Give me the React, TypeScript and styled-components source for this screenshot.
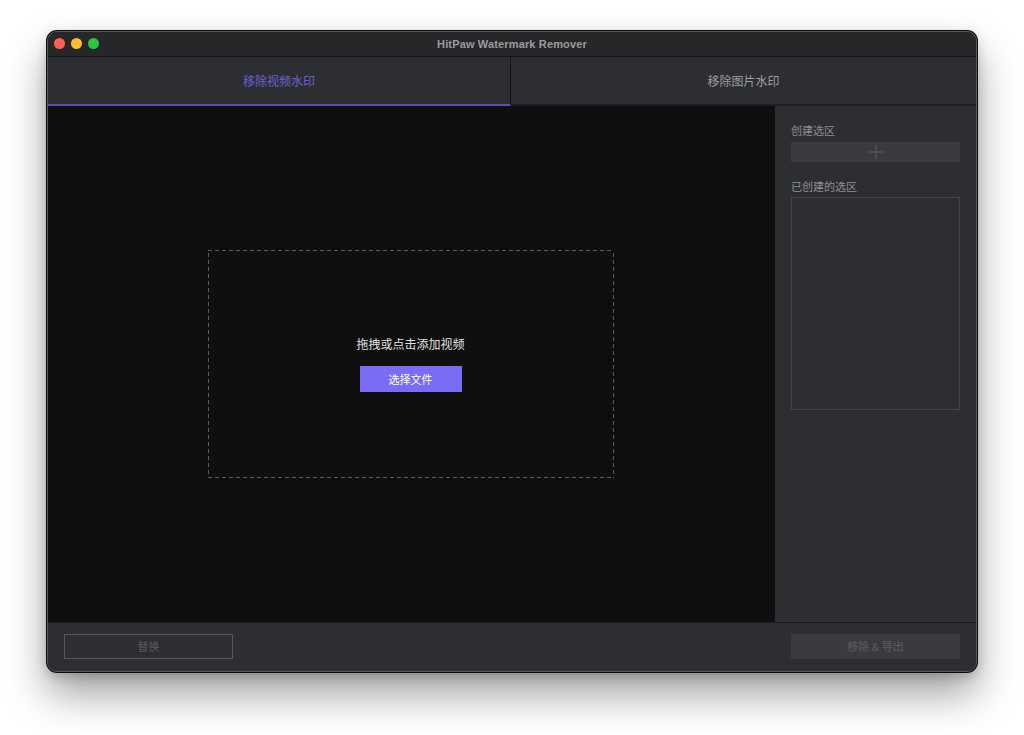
import * as React from "react";
import styled, { createGlobalStyle } from "styled-components";

const GlobalStyle = createGlobalStyle`
  html, body {
    margin: 0;
    padding: 0;
    background: #ffffff;
  }
  body {
    font-family: "Noto Sans CJK SC", "Noto Sans", sans-serif;
  }
`;

const Page = styled.div`
  width: 1024px;
  height: 735px;
  padding-top: 31px;
  box-sizing: border-box;
  display: flex;
  justify-content: center;
  align-items: flex-start;
`;

const Window = styled.div`
  width: 930px;
  height: 641px;
  box-sizing: border-box;
  border: 1px solid #5a5a5c;
  border-radius: 10px;
  background: #2d2e31;
  overflow: hidden;
  display: flex;
  flex-direction: column;
  box-shadow: 0 0 0 1px #0b0b0b, 0 22px 40px rgba(0, 0, 0, 0.38),
    0 4px 12px rgba(0, 0, 0, 0.2);
`;

const TitleBar = styled.div`
  position: relative;
  height: 24px;
  flex: 0 0 24px;
  background: #27272a;
  border-bottom: 1px solid #151516;
  display: flex;
  align-items: center;
  justify-content: center;
`;

const Lights = styled.div`
  position: absolute;
  left: 6px;
  top: 6px;
  display: flex;
  gap: 6px;
`;

const Light = styled.span<{ $color: string }>`
  width: 11px;
  height: 11px;
  border-radius: 50%;
  background: ${(p) => p.$color};
`;

const Title = styled.div`
  font-family: "Liberation Sans", "Noto Sans", sans-serif;
  font-weight: 700;
  font-size: 11px;
  color: #9c9c9e;
  letter-spacing: 0.15px;
`;

const Tabs = styled.div`
  display: flex;
  height: 49px;
  flex: 0 0 49px;
  background: #2d2e31;
`;

const Tab = styled.div<{ $active?: boolean }>`
  flex: 0 0 ${(p) => (p.$active ? "463px" : "auto")};
  flex-grow: ${(p) => (p.$active ? 0 : 1)};
  display: flex;
  align-items: center;
  justify-content: center;
  font-size: 12px;
  color: ${(p) => (p.$active ? "#6e60d6" : "#9e9ea0")};
  border-bottom: ${(p) => (p.$active ? "2px solid #5a4fb4" : "2px solid #1e1e20")};
  border-right: ${(p) => (p.$active ? "1px solid #141415" : "none")};
  box-sizing: border-box;
`;

const Body = styled.div`
  flex: 1;
  display: flex;
  min-height: 0;
`;

const Stage = styled.div`
  flex: 0 0 727px;
  background: #0f0f10;
  display: flex;
  align-items: center;
  justify-content: center;
  padding-right: 2px;
  box-sizing: border-box;
`;

// dashes drawn with gradients to get the longer 4px dash of the original
const DropZone = styled.div`
  width: 406px;
  height: 228px;
  box-sizing: border-box;
  background-image: linear-gradient(90deg, #5c5c5e 4px, transparent 4px),
    linear-gradient(90deg, #5c5c5e 4px, transparent 4px),
    linear-gradient(0deg, #5c5c5e 4px, transparent 4px),
    linear-gradient(0deg, #5c5c5e 4px, transparent 4px);
  background-size: 7px 1px, 7px 1px, 1px 7px, 1px 7px;
  background-position: 0 0, 0 100%, 0 0, 100% 0;
  background-repeat: repeat-x, repeat-x, repeat-y, repeat-y;
  display: flex;
  flex-direction: column;
  align-items: center;
  justify-content: center;
  gap: 14px;
`;

const DropText = styled.div`
  font-size: 12px;
  line-height: 17px;
  color: #e2e2e2;
  margin-top: -2px;
`;

const PrimaryButton = styled.button`
  width: 102px;
  height: 26px;
  border: none;
  background: #7b6cf6;
  color: #ffffff;
  font-family: inherit;
  font-size: 11px;
  padding: 0;
`;

const Sidebar = styled.div`
  flex: 1;
  background: #2d2e31;
  padding: 17px 16px 0;
  display: flex;
  flex-direction: column;
`;

const Label = styled.div<{ $top?: number }>`
  font-size: 11px;
  line-height: 14px;
  color: #8e8e90;
  margin-top: ${(p) => p.$top ?? 0}px;
  margin-bottom: ${(p) => (p.$top ? 4 : 5)}px;
`;

const AddButton = styled.div`
  height: 20px;
  background: #3a3b3e;
  display: flex;
  align-items: center;
  justify-content: center;
`;

const RegionList = styled.div`
  height: 213px;
  box-sizing: border-box;
  border: 1px solid #454648;
`;

const BottomBar = styled.div`
  flex: 0 0 49px;
  height: 49px;
  box-sizing: border-box;
  border-top: 1px solid #1a1a1b;
  background: #2d2e31;
  display: flex;
  align-items: center;
  justify-content: space-between;
  padding: 0 16px 2px;
`;

const FooterButton = styled.div<{ $filled?: boolean }>`
  width: 169px;
  height: 25px;
  box-sizing: border-box;
  display: flex;
  align-items: center;
  justify-content: center;
  font-size: 11px;
  color: ${(p) => (p.$filled ? "#5e5e60" : "#5a5a5c")};
  background: ${(p) => (p.$filled ? "#3a3b3e" : "transparent")};
  border: ${(p) => (p.$filled ? "none" : "1px solid #58585a")};
  white-space: pre;
`;

export default function App() {
  return (
    <Page>
      <GlobalStyle />
      <Window>
        <TitleBar>
          <Lights>
            <Light $color="#fe5f57" />
            <Light $color="#febc2e" />
            <Light $color="#28c840" />
          </Lights>
          <Title>HitPaw Watermark Remover</Title>
        </TitleBar>
        <Tabs>
          <Tab $active>移除视频水印</Tab>
          <Tab>移除图片水印</Tab>
        </Tabs>
        <Body>
          <Stage>
            <DropZone>
              <DropText>拖拽或点击添加视频</DropText>
              <PrimaryButton>选择文件</PrimaryButton>
            </DropZone>
          </Stage>
          <Sidebar>
            <Label>创建选区</Label>
            <AddButton>
              <svg width="14" height="14" viewBox="0 0 14 14">
                <path d="M7 0v14M0 7h14" stroke="#5c5d60" strokeWidth="1.2" />
              </svg>
            </AddButton>
            <Label $top={17}>已创建的选区</Label>
            <RegionList />
          </Sidebar>
        </Body>
        <BottomBar>
          <FooterButton>替换</FooterButton>
          <FooterButton $filled>移除 &amp; 导出</FooterButton>
        </BottomBar>
      </Window>
    </Page>
  );
}
